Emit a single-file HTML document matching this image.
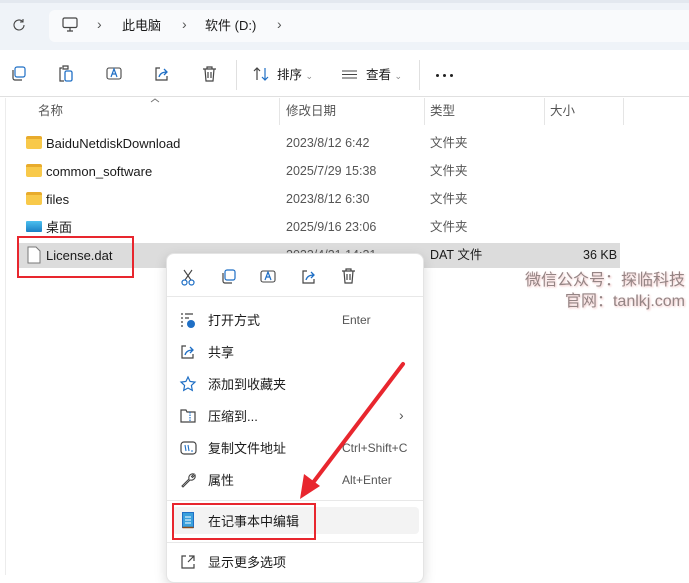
<!DOCTYPE html>
<html><head><meta charset="utf-8"><style>
*{margin:0;padding:0;box-sizing:border-box}
body{width:689px;height:575px;overflow:hidden;background:#fff;position:relative;font-family:"Liberation Sans","Noto Sans CJK SC",sans-serif;font-size:12.5px;color:#1a1a1a}
.a{position:absolute}
.t{position:absolute;white-space:nowrap;line-height:17px}
.g{color:#555}
svg{position:absolute;overflow:visible}
</style></head><body>
<div class="a" style="left:0;top:0;width:689px;height:50px;background:#eff3f8"></div>
<div class="a" style="left:0;top:0;width:689px;height:3px;background:#e3e8ef"></div>
<div class="a" style="left:49px;top:10px;width:650px;height:32px;background:#f9fafc;border-radius:6px"></div>
<svg style="left:12px;top:18px" width="14" height="14" viewBox="0 0 14 14"><path d="M12 7a5 5 0 1 1-1.5-3.6M11 1v3h-3" fill="none" stroke="#444" stroke-width="1.1"/></svg>
<svg style="left:62px;top:17px" width="16" height="15" viewBox="0 0 16 15"><rect x="1" y="1" width="14" height="9.5" rx="1.5" fill="none" stroke="#444" stroke-width="1.2"/><path d="M5 14h6M8 10.5v3.5" stroke="#444" stroke-width="1.2"/></svg>
<div class="t" style="left:97px;top:16px;color:#555;font-size:14px">›</div>
<div class="t" style="left:122px;top:16.5px;font-size:13px">此电脑</div>
<div class="t" style="left:182px;top:16px;color:#555;font-size:14px">›</div>
<div class="t" style="left:205px;top:16.5px;font-size:13px">软件 (D:)</div>
<div class="t" style="left:277px;top:16px;color:#555;font-size:14px">›</div>
<div class="a" style="left:0;top:50px;width:689px;height:47px;background:#fff;border-bottom:1px solid #e0e0e0"></div>
<svg style="left:11px;top:66px" width="15" height="15" viewBox="0 0 15 15"><rect x="4" y="1" width="10" height="10" rx="2" fill="none" stroke="#1f6fc5" stroke-width="1.2"/><path d="M2 4v8a2 2 0 0 0 2 2h7" fill="none" stroke="#444" stroke-width="1.2"/></svg>
<svg style="left:58px;top:65px" width="16" height="17" viewBox="0 0 16 17"><path d="M4 3H2v13h4M5 1h5v3H5z" fill="none" stroke="#444" stroke-width="1.2"/><rect x="7" y="6" width="7" height="10" rx="1.5" fill="none" stroke="#1f6fc5" stroke-width="1.3"/></svg>
<svg style="left:106px;top:66px" width="16" height="15" viewBox="0 0 16 15"><rect x="1" y="2" width="14" height="11" rx="2" fill="none" stroke="#444" stroke-width="1.1"/><path d="M5 11l3-8 3 8M6 8h4" fill="none" stroke="#1f6fc5" stroke-width="1.2"/></svg>
<svg style="left:154px;top:66px" width="16" height="15" viewBox="0 0 16 15"><path d="M6 2H2v12h11v-4" fill="none" stroke="#444" stroke-width="1.2"/><path d="M5 11c1-4 4-5 8-5M10 3l3 3-3 3" fill="none" stroke="#1f6fc5" stroke-width="1.3"/></svg>
<svg style="left:202px;top:66px" width="15" height="16" viewBox="0 0 15 16"><path d="M1 3h13M5 3V1h5v2M3 3l1 12h7l1-12M6 6v6M9 6v6" fill="none" stroke="#444" stroke-width="1.2"/></svg>
<div class="a" style="left:236px;top:60px;width:1px;height:30px;background:#e0e0e0"></div>
<svg style="left:253px;top:67px" width="17" height="14" viewBox="0 0 17 14"><path d="M4 13V1M1 4l3-3 3 3" fill="none" stroke="#444" stroke-width="1.2"/><path d="M12 1v12M9 10l3 3 3-3" fill="none" stroke="#1f6fc5" stroke-width="1.2"/></svg>
<div class="t" style="left:277px;top:66.5px">排序 <span style="font-size:9px;color:#888">⌄</span></div>
<svg style="left:342px;top:70px" width="15" height="10"><path d="M0 1h15M0 4.5h15M0 8h15" stroke="#444" stroke-width="1.1"/></svg>
<div class="t" style="left:366px;top:66.5px">查看 <span style="font-size:9px;color:#888">⌄</span></div>
<div class="a" style="left:419px;top:60px;width:1px;height:30px;background:#e0e0e0"></div>
<svg style="left:436px;top:74px" width="18" height="3"><circle cx="1.5" cy="1.5" r="1.5" fill="#222"/><circle cx="8.5" cy="1.5" r="1.5" fill="#222"/><circle cx="15.5" cy="1.5" r="1.5" fill="#222"/></svg>
<svg style="left:151px;top:98px" width="8" height="5"><path d="M0 4l4-3 4 3" fill="none" stroke="#777"/></svg>
<div class="t g" style="left:38px;top:102.5px">名称</div>
<div class="t g" style="left:286px;top:102.5px">修改日期</div>
<div class="t g" style="left:430px;top:102.5px">类型</div>
<div class="t g" style="left:550px;top:102.5px">大小</div>
<div class="a" style="left:279px;top:98px;width:1px;height:27px;background:#e5e5e5"></div>
<div class="a" style="left:424px;top:98px;width:1px;height:27px;background:#e5e5e5"></div>
<div class="a" style="left:544px;top:98px;width:1px;height:27px;background:#e5e5e5"></div>
<div class="a" style="left:623px;top:98px;width:1px;height:27px;background:#e5e5e5"></div>
<div class="a" style="left:5px;top:98px;width:1px;height:477px;background:#ececec"></div>
<div class="a" style="left:26px;top:136px;width:16px;height:13px;background:#f8c94a;border-radius:2px;border-top:3px solid #e8ab2c"></div>
<div class="t" style="left:46px;top:134.5px;font-size:13px">BaiduNetdiskDownload</div>
<div class="t g" style="left:286px;top:134.5px">2023/8/12 6:42</div><div class="t g" style="left:430px;top:134.5px">文件夹</div>
<div class="a" style="left:26px;top:164px;width:16px;height:13px;background:#f8c94a;border-radius:2px;border-top:3px solid #e8ab2c"></div>
<div class="t" style="left:46px;top:162.5px;font-size:13px">common_software</div>
<div class="t g" style="left:286px;top:162.5px">2025/7/29 15:38</div><div class="t g" style="left:430px;top:162.5px">文件夹</div>
<div class="a" style="left:26px;top:192px;width:16px;height:13px;background:#f8c94a;border-radius:2px;border-top:3px solid #e8ab2c"></div>
<div class="t" style="left:46px;top:190.5px;font-size:13px">files</div>
<div class="t g" style="left:286px;top:190.5px">2023/8/12 6:30</div><div class="t g" style="left:430px;top:190.5px">文件夹</div>
<div class="a" style="left:26px;top:221px;width:16px;height:11px;background:linear-gradient(#4cc0ef,#1a7fc4);border-radius:1px"></div>
<div class="t" style="left:46px;top:218.5px;font-size:13px">桌面</div>
<div class="t g" style="left:286px;top:218.5px">2025/9/16 23:06</div><div class="t g" style="left:430px;top:218.5px">文件夹</div>
<div class="a" style="left:17px;top:243px;width:603px;height:25px;background:#dcdcdc"></div>
<svg style="left:27px;top:246px" width="14" height="18" viewBox="0 0 14 18"><path d="M1 1h8l4 4v12H1z" fill="#fff" stroke="#777"/></svg>
<div class="t" style="left:46px;top:246.5px;font-size:13px">License.dat</div>
<div class="t g" style="left:286px;top:246.5px">2023/4/21 14:21</div><div class="t" style="left:430px;top:246.5px">DAT 文件</div><div class="t" style="left:583px;top:246.5px">36 KB</div>
<div class="a" style="left:17px;top:236px;width:117px;height:42px;border:2px solid #e8262e"></div>
<div class="t" style="right:4px;top:270px;font-size:16px;color:#958585;text-align:right;line-height:21px;text-shadow:1px 1px 2px #f0c0c0">微信公众号：探临科技<br>官网：tanlkj.com</div>
<div class="a" style="left:166px;top:253px;width:258px;height:330px;background:#fff;border:1px solid #e4e4e4;border-radius:8px;box-shadow:0 4px 12px rgba(0,0,0,.15)"></div>
<svg style="left:181px;top:269px" width="14" height="17" viewBox="0 0 14 17"><path d="M3 1l7 10M11 1L4 11" stroke="#444" stroke-width="1.1"/><circle cx="3.5" cy="13.5" r="2.5" fill="none" stroke="#1f6fc5" stroke-width="1.2"/><circle cx="10.5" cy="13.5" r="2.5" fill="none" stroke="#1f6fc5" stroke-width="1.2"/></svg>
<svg style="left:221px;top:269px" width="15" height="15" viewBox="0 0 15 15"><rect x="4" y="1" width="10" height="10" rx="2" fill="none" stroke="#1f6fc5" stroke-width="1.2"/><path d="M2 4v8a2 2 0 0 0 2 2h7" fill="none" stroke="#444" stroke-width="1.2"/></svg>
<svg style="left:260px;top:269px" width="16" height="15" viewBox="0 0 16 15"><rect x="1" y="2" width="14" height="11" rx="2" fill="none" stroke="#444" stroke-width="1.1"/><path d="M5 11l3-8 3 8M6 8h4" fill="none" stroke="#1f6fc5" stroke-width="1.2"/></svg>
<svg style="left:301px;top:269px" width="16" height="15" viewBox="0 0 16 15"><path d="M6 2H2v12h11v-4" fill="none" stroke="#444" stroke-width="1.2"/><path d="M5 11c1-4 4-5 8-5M10 3l3 3-3 3" fill="none" stroke="#1f6fc5" stroke-width="1.3"/></svg>
<svg style="left:341px;top:268px" width="15" height="16" viewBox="0 0 15 16"><path d="M1 3h13M5 3V1h5v2M3 3l1 12h7l1-12M6 6v6M9 6v6" fill="none" stroke="#444" stroke-width="1.2"/></svg>
<div class="a" style="left:167px;top:296px;width:256px;height:1px;background:#e8e8e8"></div>
<svg style="left:180px;top:312px" width="16" height="16" viewBox="0 0 16 16"><path d="M1 2h2M1 6h2M1 10h2M1 14h2M5 2h8M5 6h4" stroke="#444" stroke-width="1.2"/><circle cx="11" cy="12" r="4" fill="#1f6fc5"/></svg>
<div class="t" style="left:208px;top:311.5px;font-size:13px">打开方式</div><div class="t g" style="left:342px;top:311.5px;font-size:12px">Enter</div>
<svg style="left:180px;top:344px" width="16" height="15" viewBox="0 0 16 15"><path d="M6 2H2v12h11v-4" fill="none" stroke="#444" stroke-width="1.2"/><path d="M5 11c1-4 4-5 8-5M10 3l3 3-3 3" fill="none" stroke="#1f6fc5" stroke-width="1.3"/></svg>
<div class="t" style="left:208px;top:343.5px;font-size:13px">共享</div>
<svg style="left:180px;top:376px" width="16" height="16" viewBox="0 0 16 16"><path d="M8 1l2.1 4.5 4.9.6-3.6 3.4.9 4.9L8 12l-4.3 2.4.9-4.9L1 6.1l4.9-.6z" fill="none" stroke="#1f6fc5" stroke-width="1.2"/></svg>
<div class="t" style="left:208px;top:375.5px;font-size:13px">添加到收藏夹</div>
<svg style="left:180px;top:408px" width="16" height="15" viewBox="0 0 16 15"><path d="M1 2h5l1 2h8v10H1z" fill="none" stroke="#444" stroke-width="1.2"/><path d="M10 4v9" stroke="#1f6fc5" stroke-width="1.2" stroke-dasharray="1.5 1"/></svg>
<div class="t" style="left:208px;top:407.5px;font-size:13px">压缩到...</div><div class="t g" style="left:399px;top:407px;font-size:14px">›</div>
<svg style="left:180px;top:441px" width="17" height="14" viewBox="0 0 17 14"><rect x="1" y="1" width="15" height="12" rx="3" fill="none" stroke="#444" stroke-width="1.2"/><path d="M5 4l1 6M8 4l1 6M11 10h2" stroke="#1f6fc5" stroke-width="1.1"/></svg>
<div class="t" style="left:208px;top:439.5px;font-size:13px">复制文件地址</div><div class="t g" style="left:342px;top:439.5px;font-size:12px">Ctrl+Shift+C</div>
<svg style="left:180px;top:472px" width="16" height="16" viewBox="0 0 16 16"><path d="M2 14l7-7a4 4 0 0 1 5-5l-2.5 2.5 1 1L15 3a4 4 0 0 1-5 5l-7 7z" fill="none" stroke="#444" stroke-width="1.1"/></svg>
<div class="t" style="left:208px;top:471.5px;font-size:13px">属性</div><div class="t g" style="left:342px;top:471.5px;font-size:12px">Alt+Enter</div>
<div class="a" style="left:167px;top:500px;width:256px;height:1px;background:#e8e8e8"></div>
<div class="a" style="left:172px;top:507px;width:247px;height:27px;background:#f3f3f3;border-radius:4px"></div>
<svg style="left:182px;top:511px" width="12" height="18" viewBox="0 0 12 18"><rect x="0.5" y="1.5" width="11" height="15" fill="#3aa0dc" stroke="#1f6fc5"/><path d="M3 6h6M3 9h6M3 12h6" stroke="#fff"/><path d="M0.5 16.5h11" stroke="#8a4a1a" stroke-width="1.5"/></svg>
<div class="t" style="left:208px;top:512.5px;font-size:13px">在记事本中编辑</div>
<div class="a" style="left:172px;top:503px;width:144px;height:37px;border:2px solid #e8262e"></div>
<div class="a" style="left:167px;top:542px;width:256px;height:1px;background:#e8e8e8"></div>
<svg style="left:180px;top:554px" width="16" height="16" viewBox="0 0 16 16"><path d="M6 2H2v12h12v-4M9 2h5v5M14 2L8 8" fill="none" stroke="#444" stroke-width="1.2"/></svg>
<div class="t" style="left:208px;top:553.5px;font-size:13px">显示更多选项</div>
<svg style="left:0;top:0" width="689" height="575"><path d="M403 364L312 484" stroke="#e8262e" stroke-width="4" stroke-linecap="round"/><path d="M300 499l4-25 16 12z" fill="#e8262e"/></svg>
</body></html>
